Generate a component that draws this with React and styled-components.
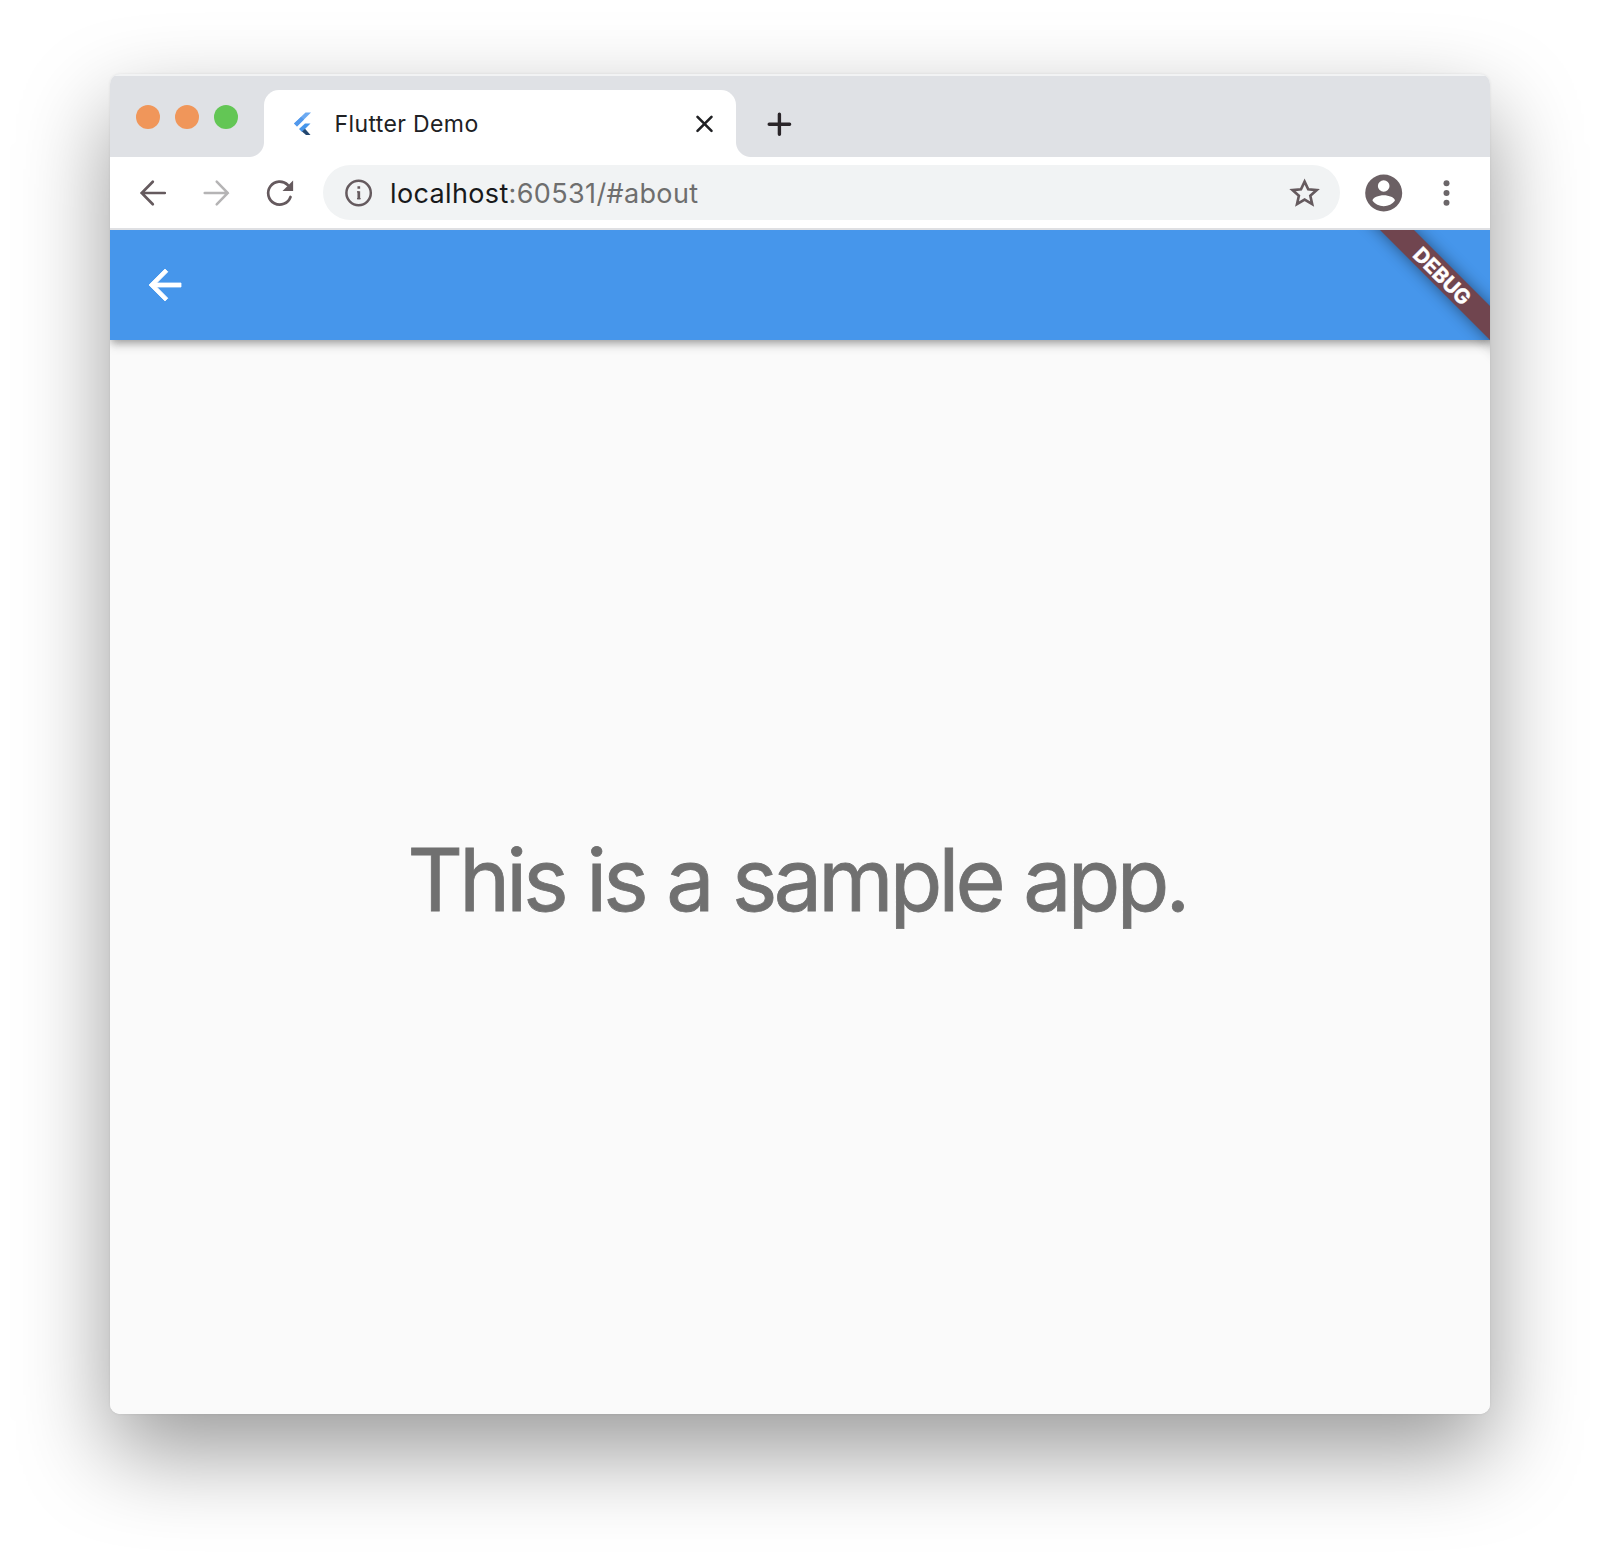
import React from "react";
import styled, { createGlobalStyle, css } from "styled-components";

const GlobalStyle = createGlobalStyle`
  html, body { margin: 0; padding: 0; background: #fff; }
  *, *::before, *::after { box-sizing: border-box; }
`;

const sans = css`
  font-family: Inter, Roboto, "Liberation Sans", sans-serif;
`;

const Desktop = styled.div`
  ${sans}
  width: 1600px;
  height: 1559px;
  padding: 74px 110px 145px;
  overflow: hidden;
  background: #fff;
`;

const BrowserWindow = styled.div`
  display: flex;
  flex-direction: column;
  height: 1340px;
  border-radius: 10px;
  overflow: hidden;
  background: #fff;
  box-shadow:
    0 0 3px rgba(0, 0, 0, 0.08),
    0 38px 90px rgba(0, 0, 0, 0.4);
`;

const TabStrip = styled.div`
  display: flex;
  align-items: flex-end;
  height: 83px;
  flex: none;
  background: #dfe1e5;
  border-top: 2px solid #f2f3f4;
`;

const TrafficLights = styled.div`
  display: flex;
  gap: 15.3px;
  align-self: flex-start;
  width: 154px;
  padding: 29px 0 0 25.7px;
`;

const Light = styled.span`
  width: 24px;
  height: 24px;
  flex: none;
  border-radius: 50%;
  background: ${(p) => p.$color};
`;

const Tab = styled.div`
  position: relative;
  display: flex;
  align-items: center;
  width: 472px;
  height: 67px;
  padding: 0 23px 0 28px;
  border-radius: 15px 15px 0 0;
  background: #fff;

  &::before,
  &::after {
    content: "";
    position: absolute;
    bottom: 0;
    width: 15px;
    height: 15px;
  }
  &::before {
    right: 100%;
    background: radial-gradient(circle at 0 0, transparent 14.5px, #fff 15.5px);
  }
  &::after {
    left: 100%;
    background: radial-gradient(circle at 100% 0, transparent 14.5px, #fff 15.5px);
  }
`;

const TabTitle = styled.span`
  flex: 1;
  margin-left: 22.5px;
  font-size: 23px;
  line-height: 30px;
  letter-spacing: 0.38px;
  color: #202124;
  white-space: nowrap;
`;

const Glyph = styled.svg`
  display: block;
  flex: none;
  overflow: visible;
`;

const NewTab = styled.div`
  display: flex;
  align-items: center;
  height: 67px;
  margin-left: 31px;
`;

const Toolbar = styled.div`
  display: flex;
  align-items: center;
  flex: none;
  height: 73px;
  padding-left: 30px;
  border-bottom: 2px solid #dfe0e3;
  background: #fff;
`;

const NavButtons = styled.div`
  display: flex;
  align-items: center;
  gap: 37px;
  width: 183px;
`;

const AddressBar = styled.div`
  display: flex;
  align-items: center;
  width: 1017px;
  height: 55px;
  padding: 1px 20px 0 22px;
  border-radius: 28px;
  background: #f1f3f4;
`;

const Address = styled.span`
  flex: 1;
  margin-left: 17px;
  padding-top: 1px;
  font-size: 27px;
  line-height: 36px;
  letter-spacing: 0.36px;
  color: #6e6e6e;
  white-space: nowrap;
`;

const Host = styled.span`
  color: #18191b;
`;

const ToolbarEnd = styled.div`
  display: flex;
  align-items: center;
  gap: 41px;
  margin-left: 25px;
`;

const Viewport = styled.div`
  position: relative;
  display: flex;
  flex-direction: column;
  flex: 1;
  overflow: hidden;
  background: #fafafa;
`;

const AppBar = styled.header`
  display: flex;
  align-items: center;
  flex: none;
  height: 110px;
  padding: 0 0 0 39px;
  background: #4696eb;
  box-shadow:
    0 4px 8px -2px rgba(0, 0, 0, 0.26),
    0 7px 9px rgba(0, 0, 0, 0.1),
    0 2px 8px rgba(0, 0, 0, 0.08);
`;

const Body = styled.main`
  display: flex;
  align-items: center;
  justify-content: center;
  flex: 1;
  padding: 6px 6px 0 0;
`;

const Message = styled.h1`
  margin: 0;
  font-size: 86px;
  line-height: 110px;
  font-weight: 400;
  letter-spacing: -3.8px;
  word-spacing: 1px;
  color: #707070;
  -webkit-text-stroke: 0.8px #707070;
  white-space: nowrap;
`;

const DebugRibbon = styled.div`
  position: absolute;
  top: 34px;
  right: -53px;
  width: 200px;
  height: 24px;
  padding-right: 1px;
  transform: rotate(45deg);
  background: #70454f;
  box-shadow: 0 0 15px rgba(0, 0, 0, 0.45);
  color: #fff;
  font-size: 20.5px;
  font-weight: 700;
  -webkit-text-stroke: 0.5px #fff;
  line-height: 26px;
  text-align: center;
`;

function FlutterIcon() {
  return (
    <Glyph width="20" height="26" viewBox="0 0 20 26">
      <path d="M2 12.5 13.5 1.5H19L5 15.5z" fill="#6caaf2" />
      <path d="M2 12.5 5 15.5 12 8.5 9 6z" fill="#5299ec" />
      <path d="M7 18 13 12.5H18.5L13 18 10 21z" fill="#4696eb" />
      <path d="M10 20.5 13 17.8 18.5 24H14z" fill="#23466f" />
    </Glyph>
  );
}

function CloseIcon() {
  return (
    <Glyph width="17" height="17" viewBox="0 0 17 17">
      <path d="M1.5 1.8 15.5 15.8M15.5 1.8 1.5 15.8" stroke="#202124" strokeWidth="2.6" strokeLinecap="round" />
    </Glyph>
  );
}

function PlusIcon() {
  return (
    <Glyph width="24" height="24" viewBox="0 0 24 24">
      <path d="M12.4 2.3V22.3M2.2 12.3H22.6" stroke="#2a2529" strokeWidth="3.4" strokeLinecap="round" />
    </Glyph>
  );
}

function BackIcon() {
  return (
    <Glyph width="26" height="26" viewBox="0 0 26 26" fill="none">
      <path d="M12.8 1.7 1.7 13 12.8 24.3M1.7 13H24.8" stroke="#655a5e" strokeWidth="2.7" strokeLinecap="round" />
    </Glyph>
  );
}

function ForwardIcon() {
  return (
    <Glyph width="26" height="26" viewBox="0 0 26 26" fill="none">
      <path d="M13.7 1.7 24.8 13 13.7 24.3M24.8 13H1.7" stroke="#b5b4b5" strokeWidth="2.5" strokeLinecap="round" />
    </Glyph>
  );
}

function ReloadIcon() {
  return (
    <Glyph width="27" height="26" viewBox="0 0 27 26" fill="none">
      <path d="M21.8 5A11.5 11.5 0 1 0 24.5 17" stroke="#655a5e" strokeWidth="2.7" strokeLinecap="round" />
      <path d="M27.1.5V11H16.5z" fill="#655a5e" />
    </Glyph>
  );
}

function InfoIcon() {
  return (
    <Glyph width="28" height="28" viewBox="0 0 28 28" fill="none">
      <circle cx="13.6" cy="14" r="12.2" stroke="#655a5e" strokeWidth="2.5" />
      <path d="M12 12.8H13.8M12 19.7H15.6" stroke="#655a5e" strokeWidth="1.2" />
      <path d="M13.8 12.2V20.3M13.8 7.2V9.8" stroke="#655a5e" strokeWidth="2.7" />
    </Glyph>
  );
}

function StarIcon() {
  return (
    <Glyph width="30" height="29" viewBox="0 0 30 29" fill="none">
      <path
        d="M15 4.2 18.3 11.2 26 11.9 20.2 17 21.9 24.7 15 20.6 8.1 24.7 9.8 17 4 11.9 11.7 11.2z"
        transform="translate(-1.9 -2) scale(1.1)"
        stroke="#655a5e"
        strokeWidth="2.4"
      />
    </Glyph>
  );
}

function ProfileIcon() {
  return (
    <Glyph width="38" height="38" viewBox="0 0 38 38">
      <circle cx="18.7" cy="19" r="18.5" fill="#6b6064" />
      <circle cx="18.7" cy="12" r="5.8" fill="#fff" />
      <path d="M7.5 26.7C7.5 23.5 13.7 21.2 18.7 21.2S29.9 23.5 29.9 26.7C27.3 30 23.3 32.2 18.7 32.2S10.1 30 7.5 26.7z" fill="#fff" />
    </Glyph>
  );
}

function MenuIcon() {
  return (
    <Glyph width="6" height="26" viewBox="0 0 6 26" fill="#6b6669">
      <circle cx="2.5" cy="3.2" r="3" />
      <circle cx="2.5" cy="13" r="3" />
      <circle cx="2.5" cy="22.8" r="3" />
    </Glyph>
  );
}

function AppBackIcon() {
  return (
    <Glyph width="32" height="32" viewBox="4 4 16 16">
      <path
        d="M20 11H7.83l5.59-5.59L12 4l-8 8 8 8 1.41-1.41L7.83 13H20v-2z"
        fill="#fff"
        stroke="#fff"
        strokeWidth=".4"
      />
    </Glyph>
  );
}

export default function App() {
  return (
    <Desktop>
      <GlobalStyle />
      <BrowserWindow>
        <TabStrip>
          <TrafficLights>
            <Light $color="#f0965a" />
            <Light $color="#f0965a" />
            <Light $color="#63c655" />
          </TrafficLights>
          <Tab>
            <FlutterIcon />
            <TabTitle>Flutter Demo</TabTitle>
            <CloseIcon />
          </Tab>
          <NewTab>
            <PlusIcon />
          </NewTab>
        </TabStrip>
        <Toolbar>
          <NavButtons>
            <BackIcon />
            <ForwardIcon />
            <ReloadIcon />
          </NavButtons>
          <AddressBar>
            <InfoIcon />
            <Address>
              <Host>localhost</Host>:60531/#about
            </Address>
            <StarIcon />
          </AddressBar>
          <ToolbarEnd>
            <ProfileIcon />
            <MenuIcon />
          </ToolbarEnd>
        </Toolbar>
        <Viewport>
          <AppBar>
            <AppBackIcon />
          </AppBar>
          <Body>
            <Message>This is a sample app.</Message>
          </Body>
          <DebugRibbon>DEBUG</DebugRibbon>
        </Viewport>
      </BrowserWindow>
    </Desktop>
  );
}
